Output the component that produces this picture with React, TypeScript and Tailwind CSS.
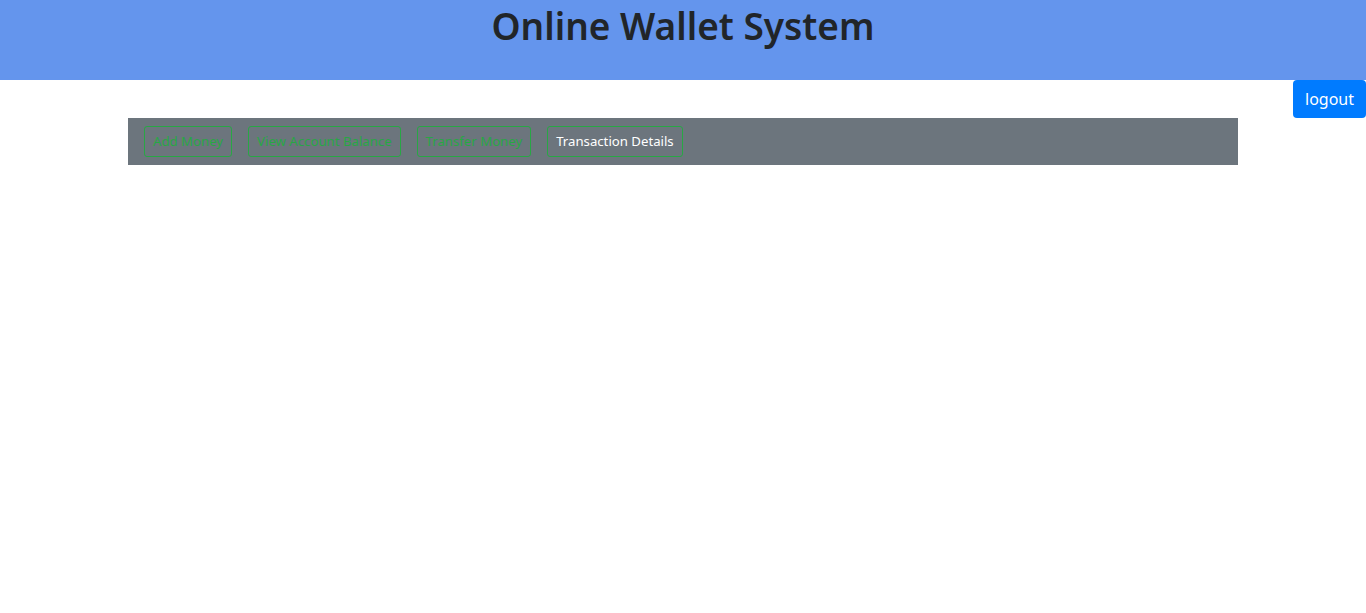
export default function App(): JSX.Element {
    const tabs = ['Add Money', 'View Account Balance', 'Transfer Money', 'Transaction Details'];
    const active = 'Transaction Details';

    return (
        <div className="min-h-[613px] bg-white font-['Noto_Sans',sans-serif] text-[#212529]">
            <header className="h-20 bg-[#6495ed] text-center">
                <h1 className="text-[37px] leading-[48px] font-semibold pt-[2px]">Online Wallet System</h1>
            </header>
            <div className="flex justify-end">
                <button className="h-[38px] rounded-[4px] bg-[#007bff] px-3 text-[16px] text-white">logout</button>
            </div>
            <div className="mx-auto w-[1110px]">
                <nav className="flex items-center gap-4 bg-[#6c757d] px-4 py-2">
                    {tabs.map((t) => (
                        <button
                            key={t}
                            className={
                                t === active
                                    ? 'h-[31px] rounded-[3px] border border-[#28a745] px-2 text-[13.2px] text-white'
                                    : 'h-[31px] rounded-[3px] border border-[#28a745] px-2 text-[13.2px] text-[#28a745]'
                            }
                        >
                            {t}
                        </button>
                    ))}
                </nav>
            </div>
        </div>
    );
}
